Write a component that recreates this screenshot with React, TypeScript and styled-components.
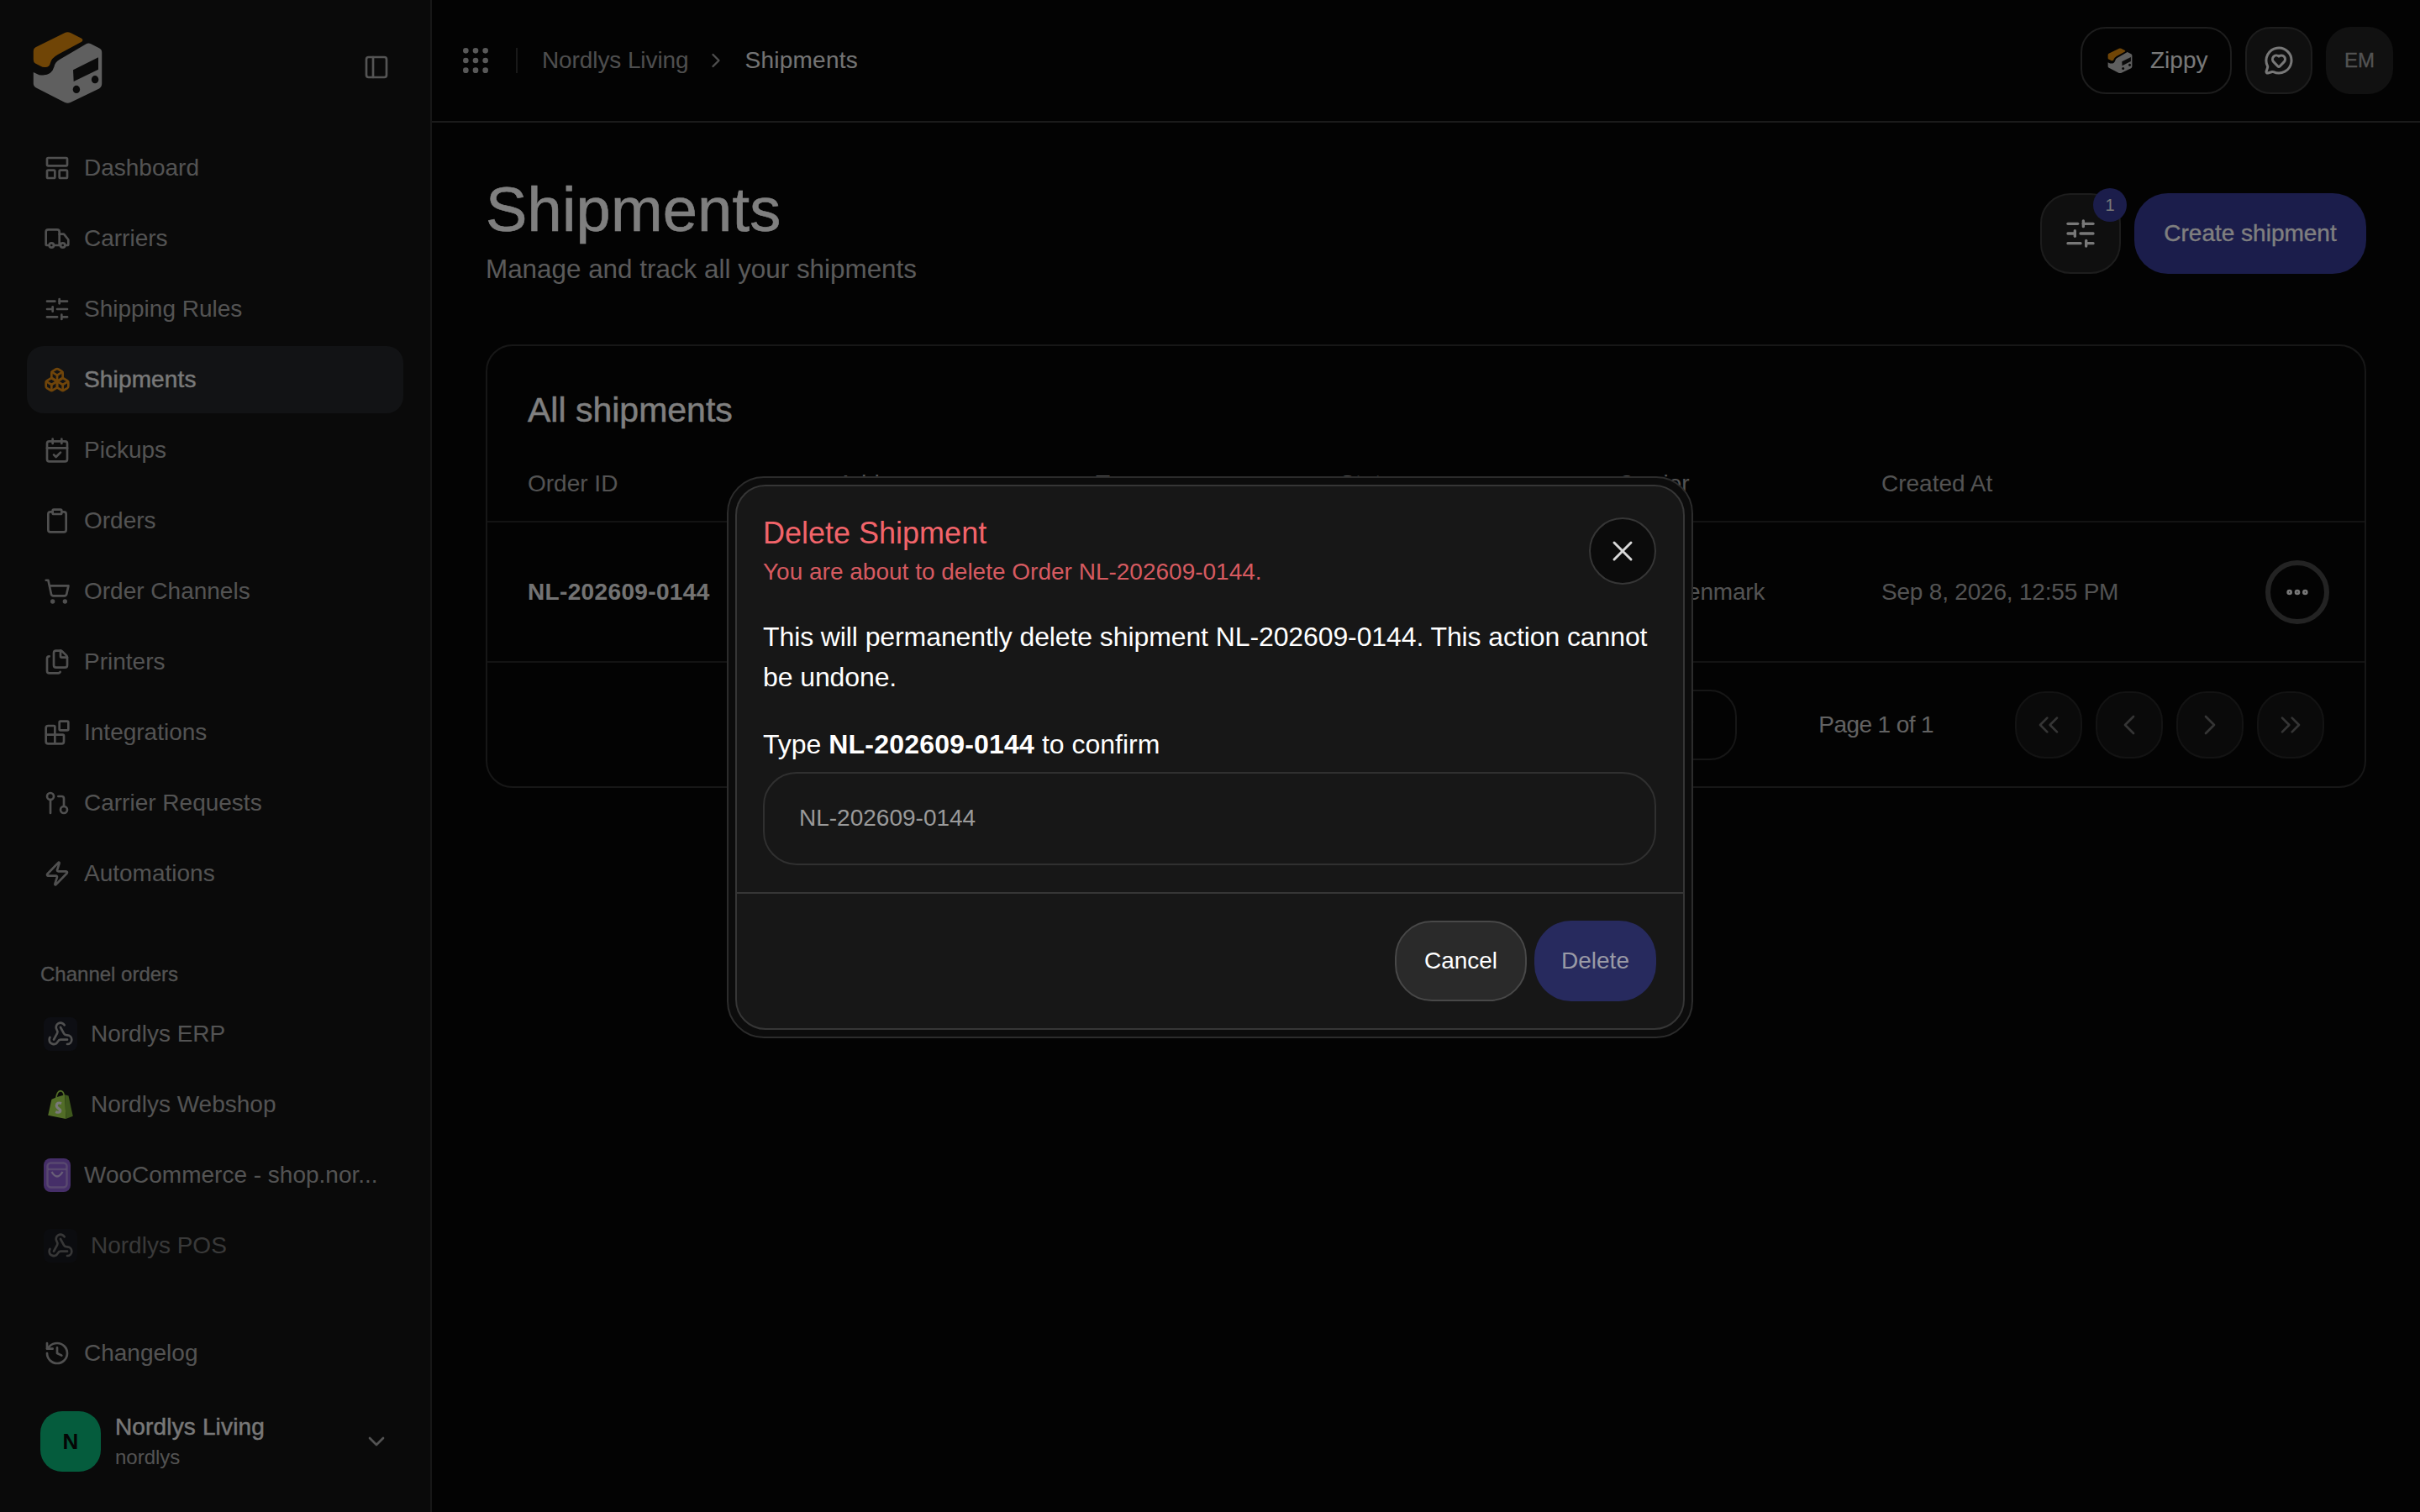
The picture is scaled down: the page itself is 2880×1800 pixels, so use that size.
import React from 'react';
import styled, { createGlobalStyle } from 'styled-components';
import {
  Blocks,
  Boxes,
  CalendarCheck,
  ChevronDown,
  ChevronLeft,
  ChevronRight,
  ChevronsLeft,
  ChevronsRight,
  Clipboard,
  Ellipsis,
  Files,
  GitPullRequest,
  Grip,
  History,
  LayoutPanelTop,
  MessageCircleHeart,
  PanelLeft,
  ShoppingCart,
  SlidersHorizontal,
  Truck,
  Webhook,
  X,
  Zap,
} from 'lucide-react';

const GlobalStyle = createGlobalStyle`
  html, body {
    margin: 0;
    padding: 0;
    width: 2880px;
    height: 1800px;
    overflow: hidden;
    background: #070707;
  }
  * {
    box-sizing: border-box;
  }
  body {
    font-family: "Liberation Sans", Arial, sans-serif;
    font-size: 28px;
    color: #fff;
  }
`;

const Shell = styled.div`
  display: flex;
  width: 2880px;
  height: 1800px;
`;

const Sidebar = styled.aside`
  display: flex;
  flex-direction: column;
  flex: 0 0 514px;
  height: 1800px;
  padding-bottom: 48px;
  background: #141414;
  border-right: 2px solid #2e2e2e;
`;

const SidebarHead = styled.div`
  display: flex;
  align-items: center;
  justify-content: space-between;
  height: 160px;
  padding: 0 32px 0 38px;
`;

const ToggleButton = styled.div`
  display: flex;
  align-items: center;
  justify-content: center;
  width: 64px;
  height: 64px;
  color: #a8a8a8;
`;

const Nav = styled.nav`
  display: flex;
  flex-direction: column;
  gap: 4px;
  padding: 0 32px;
`;

const NavItem = styled.div<{ $active?: boolean; $dim?: boolean; $gap?: number }>`
  display: flex;
  align-items: center;
  gap: ${(p) => p.$gap ?? 16}px;
  height: 80px;
  padding: 0 20px;
  border-radius: 20px;
  background: ${(p) => (p.$active ? '#25272a' : 'transparent')};
  color: ${(p) => (p.$active ? '#f0f0f0' : '#a6a6a6')};
  -webkit-text-stroke: ${(p) => (p.$active ? '0.4px' : '0')};
  letter-spacing: ${(p) => (p.$active ? '0.15px' : '0')};
  opacity: ${(p) => (p.$dim ? 0.65 : 1)};
  white-space: nowrap;

  svg {
    flex: none;
    color: ${(p) => (p.$active ? '#e08a14' : '#a0a0a0')};
  }
`;

const NavLabel = styled.span`
  overflow: hidden;
  text-overflow: ellipsis;
`;

const SectionLabel = styled.div`
  margin: 64px 0 15px;
  padding-left: 48px;
  font-size: 24px;
  line-height: 32px;
  color: #a6a6a6;
  -webkit-text-stroke: 0.3px;
`;

const ChannelTile = styled.span`
  display: flex;
  align-items: center;
  justify-content: center;
  flex: none;
  width: 40px;
  height: 40px;
  border-radius: 8px;
  background: #1a1c26;

  svg {
    color: #a0a0a0;
  }
`;

const BareTile = styled(ChannelTile)`
  background: transparent;
`;

const Foot = styled.div`
  margin-top: auto;
`;

const UserRow = styled.div`
  display: flex;
  align-items: center;
  gap: 17px;
  margin-top: 29px;
  padding: 0 48px;
`;

const Avatar = styled.div`
  display: flex;
  align-items: center;
  justify-content: center;
  flex: none;
  width: 72px;
  height: 72px;
  border-radius: 26px;
  background: #0ab87a;
  color: #0a0a0a;
  font-size: 26px;
  font-weight: 700;
`;

const UserText = styled.div`
  display: flex;
  flex-direction: column;
  gap: 2px;
  flex: 1;
`;

const UserName = styled.div`
  line-height: 36px;
  letter-spacing: 0.15px;
  color: #f0f0f0;
  -webkit-text-stroke: 0.4px;
`;

const UserHandle = styled.div`
  font-size: 24px;
  line-height: 32px;
  color: #a6a6a6;
`;

const UserChevron = styled.span`
  display: flex;
  color: #a6a6a6;
`;

const Main = styled.main`
  display: flex;
  flex-direction: column;
  flex: 1;
  min-width: 0;
`;

const Topbar = styled.header`
  display: flex;
  align-items: center;
  height: 146px;
  padding: 0 32px;
  border-bottom: 2px solid #363636;
`;

const GripWrap = styled.span`
  display: flex;
  color: #b0b0b0;
`;

const TopDivider = styled.span`
  width: 2px;
  height: 30px;
  margin: 0 29px 0 28px;
  background: #333;
`;

const Crumb = styled.span<{ $current?: boolean }>`
  color: ${(p) => (p.$current ? '#e6e6e6' : '#9c9c9c')};
  letter-spacing: ${(p) => (p.$current ? '0.25px' : '-0.1px')};
`;

const CrumbSep = styled.span`
  display: flex;
  margin: 0 20px 0 19px;
  color: #9c9c9c;
`;

const TopActions = styled.div`
  display: flex;
  align-items: center;
  gap: 16px;
  margin-left: auto;
`;

const ZippyButton = styled.div`
  display: flex;
  align-items: center;
  gap: 21px;
  width: 180px;
  height: 80px;
  padding-left: 30px;
  border: 2px solid #3a3a3a;
  border-radius: 30px;
  color: #f0f0f0;
`;

const SquareButton = styled.div`
  display: flex;
  align-items: center;
  justify-content: center;
  width: 80px;
  height: 80px;
  border: 2px solid #3a3a3a;
  border-radius: 30px;
  background: #1f1f1f;
  color: #f0f0f0;
`;

const InitialsButton = styled(SquareButton)`
  border: none;
  background: #232323;
  color: #a6a6a6;
  font-size: 24px;
  -webkit-text-stroke: 0.3px;
`;

const Content = styled.div`
  padding: 60px 64px 0;
`;

const PageHead = styled.div`
  display: flex;
  justify-content: space-between;
`;

const PageTitle = styled.h1`
  margin: 0;
  font-size: 74px;
  font-weight: 400;
  line-height: 88px;
  letter-spacing: 0.2px;
  color: #fff;
  -webkit-text-stroke: 0.6px;
`;

const PageSubtitle = styled.p`
  margin: 7px 0 0;
  font-size: 31.4px;
  line-height: 40px;
  color: #b4b4b4;
`;

const HeadActions = styled.div`
  display: flex;
  gap: 16px;
  padding-top: 24px;
`;

const FilterButton = styled.div`
  position: relative;
  display: flex;
  align-items: center;
  justify-content: center;
  width: 96px;
  height: 96px;
  border: 2px solid #3a3a3a;
  border-radius: 36px;
  background: #1f1f1f;
  color: #f0f0f0;
`;

const FilterBadge = styled.span`
  position: absolute;
  top: -8px;
  right: -9px;
  display: flex;
  align-items: center;
  justify-content: center;
  width: 40px;
  height: 40px;
  border-radius: 50%;
  background: #363a96;
  color: #f0f0f0;
  font-size: 20px;
`;

const PrimaryButton = styled.div`
  display: flex;
  align-items: center;
  justify-content: center;
  width: 276px;
  height: 96px;
  border-radius: 40px;
  background: #363a96;
  color: #fff;
  -webkit-text-stroke: 0.3px;
`;

const Card = styled.section`
  margin-top: 69px;
  border: 2px solid #2e2e2e;
  border-radius: 32px;
`;

const CardTitle = styled.h2`
  margin: 0;
  padding: 50px 48px 18px;
  font-size: 41px;
  font-weight: 400;
  line-height: 52px;
  color: #fff;
  -webkit-text-stroke: 0.4px;
`;

const TableRow = styled.div<{ $height: number }>`
  display: grid;
  grid-template-columns: 369px 307px 290px 331px 314px 1fr 76px;
  align-items: center;
  height: ${(p) => p.$height}px;
  padding: 0 42px 0 48px;
  border-bottom: 2px solid #272727;
`;

const HeadCell = styled.div`
  color: #a6a6a6;
`;

const Cell = styled.div<{ $strong?: boolean }>`
  color: ${(p) => (p.$strong ? '#e6e6e6' : '#a6a6a6')};
  font-weight: ${(p) => (p.$strong ? 700 : 400)};
  letter-spacing: ${(p) => (p.$strong ? '0.35px' : '-0.2px')};
  white-space: nowrap;
`;

const RowMenu = styled.div`
  display: flex;
  align-items: center;
  justify-content: center;
  width: 76px;
  height: 76px;
  border: 6px solid #474747;
  border-radius: 50%;
  color: #f0f0f0;
`;

const TableFoot = styled.div`
  display: flex;
  align-items: center;
  justify-content: flex-end;
  gap: 97px;
  height: 147px;
  padding: 0 48px;
`;

const PageSelect = styled.div`
  display: flex;
  align-items: center;
  justify-content: flex-end;
  width: 140px;
  height: 84px;
  padding-right: 44px;
  border: 2px solid #2c2c2c;
  border-radius: 32px;
  color: #777;
`;

const PageInfo = styled.div`
  color: #c4c4c4;
  letter-spacing: -0.6px;
  white-space: nowrap;
`;

const PagerGroup = styled.div`
  display: flex;
  gap: 16px;
`;

const PagerButton = styled.div`
  display: flex;
  align-items: center;
  justify-content: center;
  width: 80px;
  height: 80px;
  border: 2px solid #262626;
  border-radius: 36px;
  background: #141414;
  color: #6a6a6a;
`;

const Overlay = styled.div`
  position: fixed;
  inset: 0;
  display: flex;
  align-items: center;
  justify-content: center;
  padding-top: 2px;
  background: rgba(0, 0, 0, 0.5);
`;

const ModalFrame = styled.div`
  width: 1150px;
  padding: 8px;
  border: 2px solid #2c2c2c;
  border-radius: 44px;
  background: #0c0c0c;
`;

const ModalPanel = styled.div`
  border: 2px solid #363636;
  border-radius: 36px;
  background: #171717;
`;

const ModalBody = styled.div`
  padding: 32px 32px 32px 31px;
`;

const ModalHeader = styled.div`
  display: flex;
  align-items: center;
  justify-content: space-between;
`;

const ModalTitle = styled.div`
  font-size: 36px;
  line-height: 48px;
  color: #f2646a;
`;

const ModalSubtitle = styled.div`
  margin-top: 2px;
  line-height: 40px;
  color: #d65a60;
`;

const CloseButton = styled.div`
  display: flex;
  align-items: center;
  justify-content: center;
  width: 80px;
  height: 80px;
  border: 2px solid #363636;
  border-radius: 50%;
  background: #0b0b0b;
  color: #d8d8d8;
`;

const WarningText = styled.p`
  margin: 33px 0 0;
  font-size: 32px;
  line-height: 48px;
  letter-spacing: -0.1px;
  color: #fff;
`;

const ConfirmLabel = styled.label`
  display: block;
  margin-top: 32px;
  font-size: 32px;
  line-height: 48px;
  color: #fff;

  b {
    font-weight: 700;
    letter-spacing: 0.2px;
  }
`;

const ConfirmInput = styled.div`
  display: flex;
  align-items: center;
  height: 111px;
  margin-top: 9px;
  padding-left: 41px;
  border: 2px solid #303030;
  border-radius: 40px;
  color: #9a9a9a;
`;

const ModalFooter = styled.div`
  display: flex;
  justify-content: flex-end;
  gap: 9px;
  padding: 32px;
  border-top: 2px solid #363636;
`;

const CancelButton = styled.div`
  display: flex;
  align-items: center;
  justify-content: center;
  width: 157px;
  height: 96px;
  border: 2px solid #484848;
  border-radius: 44px;
  background: #2a2a2a;
  color: #fff;
`;

const DeleteButton = styled.div`
  display: flex;
  align-items: center;
  justify-content: center;
  width: 145px;
  height: 96px;
  border-radius: 44px;
  background: #272a5e;
  color: #9a9aa6;
`;

const Logo = ({ size }: { size: number }) => (
  <svg width={size} height={size * 1.02} viewBox="110 108 260 266">
    <path
      d="M230 114Q240 109 252 115L291 135Q299 141 291 147L204 194Q180 208 177 224Q174 241 156 240Q148 240 140 235L122 226Q115 222 115 212V180Q115 172 123 167Z"
      fill="#e08a0c"
    />
    <path
      d="M115 258L136 268Q180 276 191 238Q193 222 210 212L308 155Q316 150 325 155L355 170Q365 175 365 186V300Q365 312 355 318L250 369Q240 373 230 369L125 315Q115 310 115 300Z"
      fill="#bfbfbf"
    />
    <path d="M260 250L352 204V248L262 292Z" fill="#141414" />
    <ellipse cx="272" cy="321" rx="13" ry="14" fill="#141414" />
    <ellipse cx="340" cy="285" rx="13" ry="14" fill="#141414" />
  </svg>
);

const ShopifyIcon = () => (
  <svg width="32" height="36" viewBox="0 0 30 34">
    <path d="M1 29L5 11Q12 8 20 6L21 33Z" fill="#a4da4e" />
    <path d="M20 6L24 7L29 30L21 33Z" fill="#7cb038" />
    <path d="M10 10Q11 2 15 1.5Q19 2 19 8" fill="none" stroke="#a4da4e" strokeWidth="1.6" />
    <path
      d="M16 15.5Q11 14 10.5 18Q10.5 20 13 21.5Q15.5 23 14.5 25Q13 26.5 9.5 25"
      fill="none"
      stroke="#f2f2f2"
      strokeWidth="3"
    />
  </svg>
);

const WooIcon = () => (
  <svg width="32" height="40" viewBox="0 0 32 40">
    <rect width="32" height="40" rx="8" fill="#8a5cd0" />
    <rect x="4.5" y="5.5" width="23" height="29" rx="4" fill="none" stroke="#c9b4ea" strokeOpacity="0.6" strokeWidth="2.4" />
    <path d="M5 13H27" stroke="#c9b4ea" strokeOpacity="0.6" strokeWidth="2.4" />
    <path d="M9.5 16Q16 27 22.5 16" fill="none" stroke="#e2d6f5" strokeOpacity="0.8" strokeWidth="2.4" />
  </svg>
);

const navItems = [
  { label: 'Dashboard', Icon: LayoutPanelTop },
  { label: 'Carriers', Icon: Truck },
  { label: 'Shipping Rules', Icon: SlidersHorizontal },
  { label: 'Shipments', Icon: Boxes, active: true },
  { label: 'Pickups', Icon: CalendarCheck },
  { label: 'Orders', Icon: Clipboard },
  { label: 'Order Channels', Icon: ShoppingCart },
  { label: 'Printers', Icon: Files },
  { label: 'Integrations', Icon: Blocks },
  { label: 'Carrier Requests', Icon: GitPullRequest },
  { label: 'Automations', Icon: Zap },
];

export default function App() {
  return (
    <>
      <GlobalStyle />
      <Shell>
        <Sidebar>
          <SidebarHead>
            <Logo size={85} />
            <ToggleButton>
              <PanelLeft size={32} />
            </ToggleButton>
          </SidebarHead>
          <Nav>
            {navItems.map(({ label, Icon, active }) => (
              <NavItem key={label} $active={active}>
                <Icon size={32} />
                <NavLabel>{label}</NavLabel>
              </NavItem>
            ))}
          </Nav>
          <SectionLabel>Channel orders</SectionLabel>
          <Nav>
            <NavItem>
              <ChannelTile>
                <Webhook size={32} />
              </ChannelTile>
              <NavLabel>Nordlys ERP</NavLabel>
            </NavItem>
            <NavItem>
              <BareTile>
                <ShopifyIcon />
              </BareTile>
              <NavLabel>Nordlys Webshop</NavLabel>
            </NavItem>
            <NavItem>
              <WooIcon />
              <NavLabel>WooCommerce - shop.nor...</NavLabel>
            </NavItem>
            <NavItem $dim>
              <ChannelTile>
                <Webhook size={32} />
              </ChannelTile>
              <NavLabel>Nordlys POS</NavLabel>
            </NavItem>
          </Nav>
          <Foot>
            <Nav>
              <NavItem>
                <History size={32} />
                <NavLabel>Changelog</NavLabel>
              </NavItem>
            </Nav>
            <UserRow>
              <Avatar>N</Avatar>
              <UserText>
                <UserName>Nordlys Living</UserName>
                <UserHandle>nordlys</UserHandle>
              </UserText>
              <UserChevron>
                <ChevronDown size={32} />
              </UserChevron>
            </UserRow>
          </Foot>
        </Sidebar>

        <Main>
          <Topbar>
            <GripWrap>
              <Grip size={40} />
            </GripWrap>
            <TopDivider />
            <Crumb>Nordlys Living</Crumb>
            <CrumbSep>
              <ChevronRight size={28} />
            </CrumbSep>
            <Crumb $current>Shipments</Crumb>
            <TopActions>
              <ZippyButton>
                <Logo size={30} />
                Zippy
              </ZippyButton>
              <SquareButton>
                <MessageCircleHeart size={36} />
              </SquareButton>
              <InitialsButton>EM</InitialsButton>
            </TopActions>
          </Topbar>

          <Content>
            <PageHead>
              <div>
                <PageTitle>Shipments</PageTitle>
                <PageSubtitle>Manage and track all your shipments</PageSubtitle>
              </div>
              <HeadActions>
                <FilterButton>
                  <SlidersHorizontal size={40} />
                  <FilterBadge>1</FilterBadge>
                </FilterButton>
                <PrimaryButton>Create shipment</PrimaryButton>
              </HeadActions>
            </PageHead>

            <Card>
              <CardTitle>All shipments</CardTitle>
              <TableRow $height={90}>
                <HeadCell>Order ID</HeadCell>
                <HeadCell>Address</HeadCell>
                <HeadCell>Type</HeadCell>
                <HeadCell>Status</HeadCell>
                <HeadCell>Carrier</HeadCell>
                <HeadCell>Created At</HeadCell>
              </TableRow>
              <TableRow $height={167}>
                <Cell $strong>NL-202609-0144</Cell>
                <Cell />
                <Cell />
                <Cell />
                <Cell>GLS Denmark</Cell>
                <Cell>Sep 8, 2026, 12:55 PM</Cell>
                <RowMenu>
                  <Ellipsis size={32} strokeWidth={3} />
                </RowMenu>
              </TableRow>
              <TableFoot>
                <PageSelect>
                  <ChevronDown size={28} />
                </PageSelect>
                <PageInfo>Page 1 of 1</PageInfo>
                <PagerGroup>
                  <PagerButton>
                    <ChevronsLeft size={40} strokeWidth={1.6} />
                  </PagerButton>
                  <PagerButton>
                    <ChevronLeft size={40} strokeWidth={1.6} />
                  </PagerButton>
                  <PagerButton>
                    <ChevronRight size={40} strokeWidth={1.6} />
                  </PagerButton>
                  <PagerButton>
                    <ChevronsRight size={40} strokeWidth={1.6} />
                  </PagerButton>
                </PagerGroup>
              </TableFoot>
            </Card>
          </Content>
        </Main>
      </Shell>

      <Overlay>
        <ModalFrame>
          <ModalPanel>
            <ModalBody>
              <ModalHeader>
                <div>
                  <ModalTitle>Delete Shipment</ModalTitle>
                  <ModalSubtitle>You are about to delete Order NL-202609-0144.</ModalSubtitle>
                </div>
                <CloseButton>
                  <X size={40} strokeWidth={1.8} />
                </CloseButton>
              </ModalHeader>
              <WarningText>
                This will permanently delete shipment NL-202609-0144. This action cannot be undone.
              </WarningText>
              <ConfirmLabel>
                Type <b>NL-202609-0144</b> to confirm
              </ConfirmLabel>
              <ConfirmInput>NL-202609-0144</ConfirmInput>
            </ModalBody>
            <ModalFooter>
              <CancelButton>Cancel</CancelButton>
              <DeleteButton>Delete</DeleteButton>
            </ModalFooter>
          </ModalPanel>
        </ModalFrame>
      </Overlay>
    </>
  );
}
